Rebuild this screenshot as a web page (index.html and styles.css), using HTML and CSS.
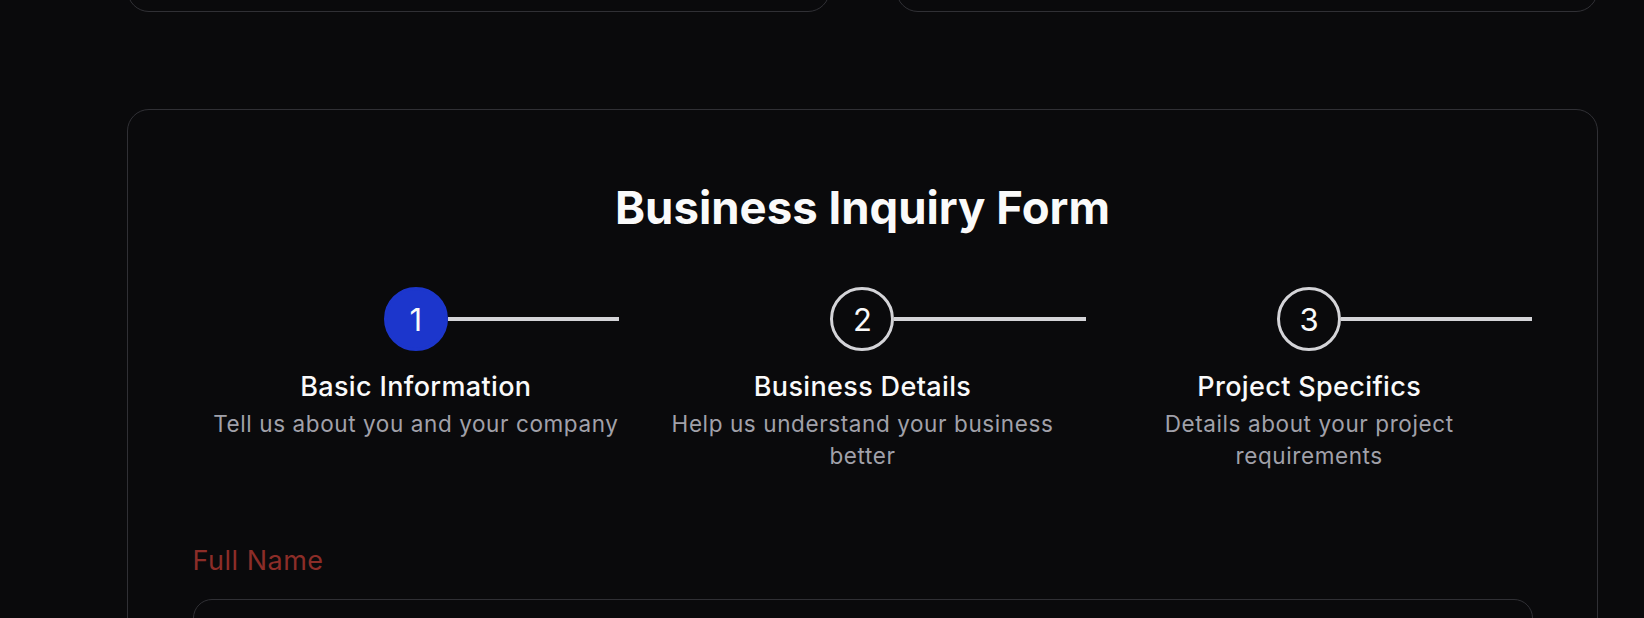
FILE: index.html
```html
<!DOCTYPE html>
<html lang="en">
<head>
<meta charset="utf-8">
<title>Business Inquiry Form</title>
<link rel="stylesheet" href="styles.css">
</head>
<body>
<div class="page">
  <div class="top-row">
    <div class="top-card"></div>
    <div class="top-card"></div>
  </div>
  <section class="form-card">
    <h1 class="form-title">Business Inquiry Form</h1>
    <div class="steps">
      <div class="step">
        <div class="step-head">
          <span class="step-spacer"></span>
          <span class="step-circle step-circle--active">1</span>
          <span class="step-line step-line--short"></span>
        </div>
        <div class="step-title">Basic Information</div>
        <div class="step-desc">Tell us about you and your company</div>
      </div>
      <div class="step">
        <div class="step-head">
          <span class="step-spacer"></span>
          <span class="step-circle">2</span>
          <span class="step-line"></span>
        </div>
        <div class="step-title">Business Details</div>
        <div class="step-desc">Help us understand your business better</div>
      </div>
      <div class="step">
        <div class="step-head">
          <span class="step-spacer"></span>
          <span class="step-circle">3</span>
          <span class="step-line"></span>
        </div>
        <div class="step-title">Project Specifics</div>
        <div class="step-desc">Details about your project requirements</div>
      </div>
    </div>
    <div class="field">
      <label class="field-label" for="fullname">Full Name</label>
      <input class="field-input" id="fullname" type="text">
    </div>
  </section>
</div>
</body>
</html>
```
FILE: styles.css
```css
* { box-sizing: border-box; }
html, body {
  margin: 0;
  padding: 0;
  background: #0a0a0c;
  overflow: hidden;
}
body {
  font-family: Inter, "Noto Sans", "Liberation Sans", sans-serif;
  color: #fafafa;
}
.page {
  padding: 0 46px 0 127px;
}
.top-row {
  display: grid;
  grid-template-columns: 1fr 1fr;
  gap: 66px;
  margin-top: -48px;
}
.top-card {
  height: 60px;
  border: 1.5px solid #303035;
  border-radius: 22px;
}
.form-card {
  margin-top: 97px;
  border: 1.5px solid #303035;
  border-radius: 22px;
  padding: 75px 64.5px 40px 64.5px;
}
.form-title {
  margin: 0;
  font-size: 45.5px;
  line-height: 46px;
  font-weight: 700;
  text-align: center;
  color: #fafafa;
}
.steps {
  margin-top: 56px;
  display: grid;
  grid-template-columns: 1fr 1fr 1fr;
}
.step {
  display: flex;
  flex-direction: column;
  align-items: center;
  text-align: center;
}
.step-head {
  width: 100%;
  display: grid;
  grid-template-columns: 1fr 64px 1fr;
  align-items: center;
}
.step-circle {
  width: 64px;
  height: 64px;
  border-radius: 50%;
  border: 3px solid #d4d4d8;
  display: flex;
  align-items: center;
  justify-content: center;
  font-size: 31px;
  font-weight: 400;
  color: #fafafa;
}
.step-circle--active {
  background: #1c36cc;
  border-color: #1c36cc;
}
.step-line {
  height: 4px;
  background: #d4d4d8;
}
.step-line--short {
  margin-right: 20px;
}
.step-title {
  margin-top: 18px;
  font-size: 27px;
  line-height: 36px;
  font-weight: 500;
  letter-spacing: 0.35px;
  color: #fafafa;
}
.step-desc {
  margin-top: 3px;
  max-width: 416px;
  font-size: 22.5px;
  line-height: 32px;
  letter-spacing: 0.6px;
  color: #a1a1aa;
}
.field {
  margin-top: 71px;
  display: flex;
  flex-direction: column;
}
.field-label {
  font-size: 27px;
  line-height: 36px;
  letter-spacing: 0.5px;
  color: #8c2d28;
}
.field-input {
  margin-top: 20px;
  height: 64px;
  border: 1.5px solid #303035;
  border-radius: 19px;
  background: transparent;
  color: #fafafa;
  font: inherit;
}
```
